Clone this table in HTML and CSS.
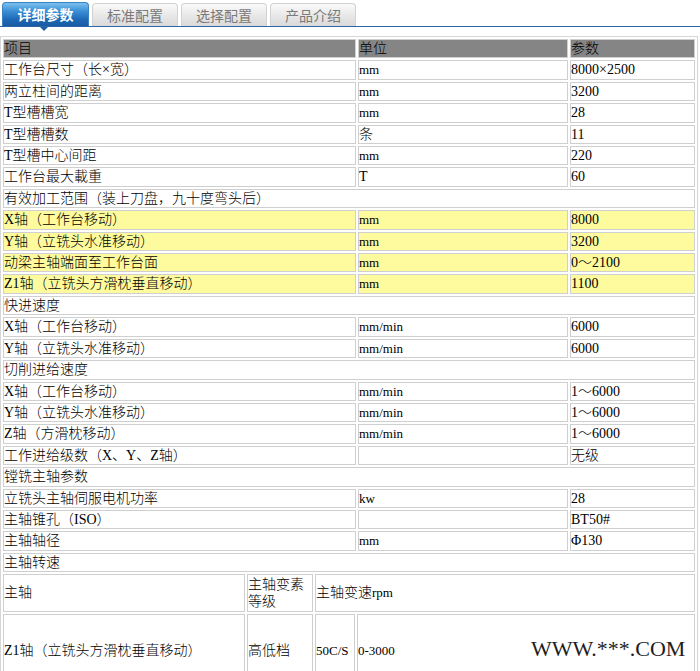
FILE: index.html
```html
<!DOCTYPE html>
<html lang="zh">
<head>
<meta charset="utf-8">
<title>详细参数</title>
<link rel="stylesheet" href="styles.css">
</head>
<body>
<div class="page">
  <div class="tabs">
    <div class="tab active">详细参数</div>
    <div class="tab">标准配置</div>
    <div class="tab">选择配置</div>
    <div class="tab">产品介绍</div>
  </div>
  <table class="spec">
    <colgroup><col class="c1"><col class="c2"><col class="c3"></colgroup>
    <tr class="head"><td>项目</td><td>单位</td><td>参数</td></tr>
    <tr><td>工作台尺寸（长×宽）</td><td class="u">mm</td><td>8000×2500</td></tr>
    <tr><td>两立柱间的距离</td><td class="u">mm</td><td>3200</td></tr>
    <tr><td>T型槽槽宽</td><td class="u">mm</td><td>28</td></tr>
    <tr><td>T型槽槽数</td><td>条</td><td>11</td></tr>
    <tr><td>T型槽中心间距</td><td class="u">mm</td><td>220</td></tr>
    <tr><td>工作台最大載重</td><td>T</td><td>60</td></tr>
    <tr><td colspan="3">有效加工范围（装上刀盘，九十度弯头后）</td></tr>
    <tr class="hl"><td>X轴（工作台移动）</td><td class="u">mm</td><td>8000</td></tr>
    <tr class="hl"><td>Y轴（立铣头水准移动）</td><td class="u">mm</td><td>3200</td></tr>
    <tr class="hl"><td>动梁主轴端面至工作台面</td><td class="u">mm</td><td>0～2100</td></tr>
    <tr class="hl"><td>Z1轴（立铣头方滑枕垂直移动）</td><td class="u">mm</td><td>1100</td></tr>
    <tr><td colspan="3">快进速度</td></tr>
    <tr><td>X轴（工作台移动）</td><td class="u">mm/min</td><td>6000</td></tr>
    <tr><td>Y轴（立铣头水准移动）</td><td class="u">mm/min</td><td>6000</td></tr>
    <tr><td colspan="3">切削进给速度</td></tr>
    <tr><td>X轴（工作台移动）</td><td class="u">mm/min</td><td>1～6000</td></tr>
    <tr><td>Y轴（立铣头水准移动）</td><td class="u">mm/min</td><td>1～6000</td></tr>
    <tr><td>Z轴（方滑枕移动）</td><td class="u">mm/min</td><td>1～6000</td></tr>
    <tr><td>工作进给级数（X、Y、Z轴）</td><td></td><td>无级</td></tr>
    <tr><td colspan="3">镗铣主轴参数</td></tr>
    <tr><td>立铣头主轴伺服电机功率</td><td class="u">kw</td><td>28</td></tr>
    <tr><td>主轴锥孔（ISO）</td><td></td><td>BT50#</td></tr>
    <tr><td>主轴轴径</td><td class="u">mm</td><td>Φ130</td></tr>
    <tr><td colspan="3">主轴转速</td></tr>
    <tr><td colspan="3" class="nest">
      <table class="inner">
        <colgroup><col class="n1"><col class="n2"><col class="n3"><col class="n4"></colgroup>
        <tr class="r1"><td>主轴</td><td>主轴变素等级</td><td colspan="2">主轴变速<span class="u">rpm</span></td></tr>
        <tr class="r2"><td>Z1轴（立铣头方滑枕垂直移动）</td><td>高低档</td><td class="u">50C/S</td><td class="u">0-3000</td></tr>
      </table>
    </td></tr>
  </table>
  <div class="mark">WWW.***.COM</div>
</div>
</body>
</html>
```
FILE: styles.css
```css
html, body {
  margin: 0;
  padding: 0;
  background: #ffffff;
}
.page {
  position: relative;
  width: 700px;
  height: 671px;
  overflow: hidden;
  font-family: "Liberation Serif", "Noto Sans CJK SC", serif;
  font-size: 14px;
  color: #000;
}
.tabs {
  display: flex;
  align-items: flex-end;
  gap: 3px;
  height: 24px;
  padding: 2px 0 0 2px;
  border-bottom: 1px solid #2d65a6;
}
.tab {
  box-sizing: border-box;
  width: 86px;
  height: 23px;
  border: 1px solid #d2d2d2;
  border-bottom: none;
  border-radius: 4px 4px 0 0;
  background: linear-gradient(#fafafa, #e9e9e9 50%, #d9d9d9);
  color: #7a7a7a;
  font-family: "Noto Sans CJK SC", sans-serif;
  font-size: 14px;
  line-height: 22px;
  text-align: center;
}
.tab.active {
  position: relative;
  width: 87px;
  height: 24px;
  border: 1px solid #3b82c4;
  border-bottom: none;
  background: linear-gradient(#7cc0ee, #3b8fd6 35%, #1f6ab8 70%, #185aa2);
  color: #ffffff;
  font-weight: bold;
  line-height: 23px;
}
.tab.active::after {
  content: "";
  position: absolute;
  left: 37px;
  bottom: -5px;
  border-left: 4px solid transparent;
  border-right: 4px solid transparent;
  border-top: 4px solid #1d5fa6;
}
.spec {
  width: 698px;
  margin-top: 9px;
  table-layout: fixed;
  border-collapse: separate;
  border-spacing: 2px;
  border: 1px solid #d6d6d6;
  font-weight: 300;
}
col.c1 { width: 353px; }
col.c2 { width: 210px; }
col.c3 { width: 125px; }
.spec td {
  padding: 0;
  border: 1px solid #cfcfcf;
  line-height: 17.4px;
  white-space: nowrap;
  overflow: hidden;
  vertical-align: middle;
}
.spec .u {
  font-size: 13px;
}
.spec tr.head td {
  background: #858585;
}
.spec tr.hl td {
  background: #fdfb9e;
}
.spec td.nest {
  border: none;
  padding: 0;
}
.inner {
  width: calc(100% + 4px);
  margin: -2px;
  table-layout: fixed;
  border-collapse: separate;
  border-spacing: 2px;
}
col.n1 { width: 242px; }
col.n2 { width: 66px; }
col.n3 { width: 40px; }
.inner td {
  white-space: normal;
}
.inner tr.r1 td {
  height: 36px;
}
.inner tr.r2 td {
  height: 72px;
  white-space: nowrap;
}
.mark {
  position: absolute;
  left: 531px;
  top: 636px;
  font-family: "Liberation Serif", serif;
  font-size: 22px;
  color: #1e1e1e;
  letter-spacing: 0;
}
```
